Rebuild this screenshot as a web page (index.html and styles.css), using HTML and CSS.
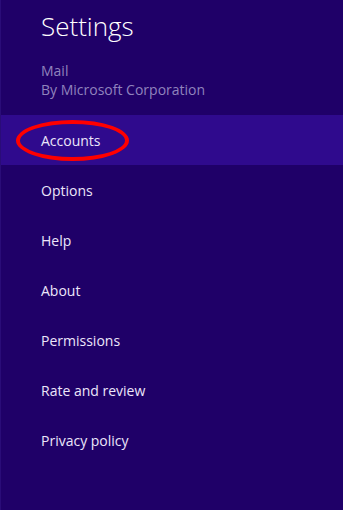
FILE: index.html
```html
<!DOCTYPE html>
<html lang="en">
<head>
    <meta charset="utf-8">
    <title>Settings</title>
    <link rel="stylesheet" href="styles.css">
</head>
<body>
    <div class="pane">
        <header class="kopf">
            <h1>Settings</h1>
            <p class="app">Mail<br>By Microsoft Corporation</p>
        </header>
        <nav class="liste">
            <a href="#" class="punkt valgt"><span class="ring">Accounts</span></a>
            <a href="#" class="punkt">Options</a>
            <a href="#" class="punkt">Help</a>
            <a href="#" class="punkt">About</a>
            <a href="#" class="punkt">Permissions</a>
            <a href="#" class="punkt">Rate and review</a>
            <a href="#" class="punkt">Privacy policy</a>
        </nav>
    </div>
</body>
</html>
```

FILE: styles.css
```css
*, *::before {
    box-sizing: border-box;
}

body {
    margin: 0;
    background-color: #1f0068;
    font-family: 'Open Sans', 'Noto Sans', sans-serif;
}

.pane {
    height: 510px;
    border-left: 1px solid #2a0c78;
}

.kopf {
    padding: 9px 0 0 40px;
}

h1 {
    margin: 0;
    font-size: 26px;
    line-height: 34px;
    font-weight: 300;
    color: #ffffff;
}

.app {
    margin: 18px 0 0;
    font-size: 14px;
    line-height: 19px;
    color: #9083bd;
}

.liste {
    display: flex;
    flex-direction: column;
    margin-top: 16px;
}

.punkt {
    display: flex;
    align-items: center;
    height: 50px;
    padding-left: 40px;
    font-size: 14px;
    color: #ece6fa;
    text-decoration: none;
}

.valgt {
    background-color: #2f0a8d;
}

/* rød markering rundt om Accounts */
.ring {
    position: relative;
}

.ring::before {
    content: "";
    position: absolute;
    left: -25px;
    top: -11px;
    width: 113px;
    height: 41px;
    border: 4px solid #ff0000;
    border-radius: 50%;
}
```
